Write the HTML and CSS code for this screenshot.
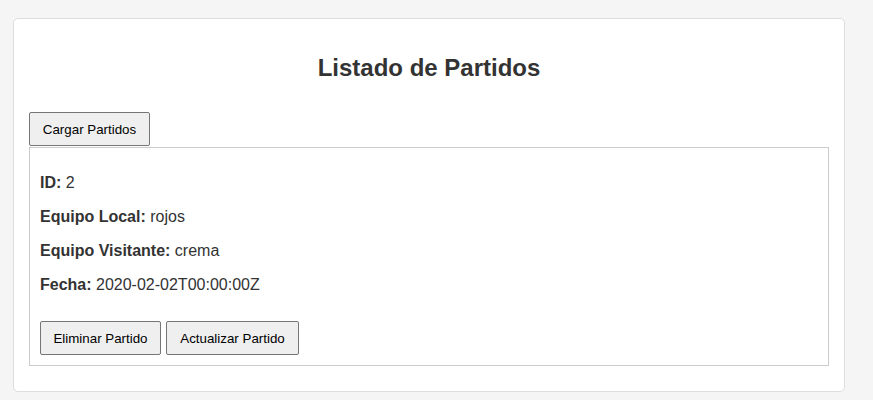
FILE: index.html
```html
<!DOCTYPE html>
<html lang="es">
<head>
<meta charset="utf-8">
<title>Listado de Partidos</title>
<link rel="stylesheet" href="styles.css">
</head>
<body>
<div class="card">
  <h2 class="title">Listado de Partidos</h2>
  <button class="btn">Cargar Partidos</button>
  <div class="match">
    <p><strong>ID:</strong> 2</p>
    <p><strong>Equipo Local:</strong> rojos</p>
    <p><strong>Equipo Visitante:</strong> crema</p>
    <p><strong>Fecha:</strong> 2020-02-02T00:00:00Z</p>
    <div class="actions">
      <button class="btn">Eliminar Partido</button>
      <button class="btn">Actualizar Partido</button>
    </div>
  </div>
</div>
</body>
</html>
```
FILE: styles.css
```css
html, body {
  margin: 0;
  background: #f5f5f5;
}
body {
  padding: 18px 28px 0 13px;
  font-family: "Liberation Sans", Arial, sans-serif;
  color: #333;
}
.card {
  background: #fff;
  border: 1px solid #ddd;
  border-radius: 5px;
  padding: 15px 15px 25px;
}
.title {
  text-align: center;
  font-size: 24px;
  font-weight: bold;
  margin: 20px 0 30px;
  line-height: 28px;
}
.btn {
  font-family: "Liberation Sans", Arial, sans-serif;
  font-size: 13.33px;
  color: #000;
  background: #efefef;
  border: 1px solid #767676;
  border-radius: 2px;
  padding: 8px 12px;
  line-height: 15px;
  height: 34px;
  width: 121px;
  display: block;
  margin: 0;
}
.match {
  border: 1px solid #ccc;
  padding: 0 10px 10px;
  margin-top: 1px;
}
.match p {
  font-size: 16px;
  line-height: 18px;
  margin: 16px 0;
}
.match p:first-child {
  margin-top: 26px;
}
.actions {
  display: flex;
  gap: 5px;
  margin-top: 27px;
}
.actions .btn:last-child {
  width: 133px;
}
```
